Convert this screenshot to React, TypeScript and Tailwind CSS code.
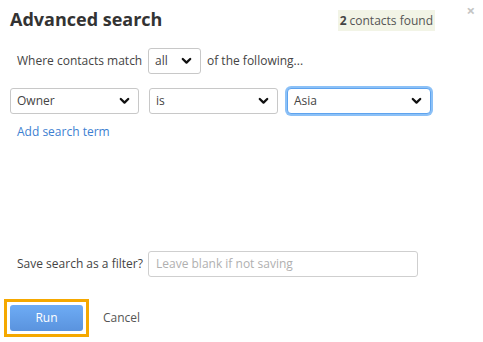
import React from "react";

function Chevron() {
  return (
    <svg width="11" height="8" viewBox="0 0 11 8" className="pointer-events-none shrink-0">
      <path d="M1.8 2 L5.5 5.6 L9.2 2" fill="none" stroke="#111" strokeWidth="2.3" strokeLinecap="round" strokeLinejoin="round" />
    </svg>
  );
}

function FakeSelect({ value, className, focused }: { value: string; className: string; focused?: boolean }) {
  return (
    <div
      className={
        "flex shrink-0 items-center justify-between h-[26px] bg-white pl-[6px] pr-[8px] text-[12px] text-[#444] " +
        (focused
          ? "border border-[#5ea3ee] rounded-[4px] shadow-[0_0_0_2px_#8cc1f7] "
          : "border border-[#c8c8c8] rounded-[3px] ") +
        className
      }
    >
      <span>{value}</span>
      <Chevron />
    </div>
  );
}

export default function App() {
  return (
    <div className="relative w-[483px] h-[342px] overflow-hidden bg-white font-['Open_Sans',sans-serif] text-[#444]">
      <div className="absolute top-[3px] right-[8px] text-[15px] leading-[15px] text-[#c4c4c4] font-bold">×</div>
      <div className="flex items-start justify-between pl-[10px] pt-[6px] pr-[48px]">
        <h1 className="text-[18px] leading-[26px] font-bold text-[#333] whitespace-nowrap">Advanced search</h1>
        <div className="mt-[4px] h-[21px] px-[2px] flex items-center bg-[#f2f4e6] text-[12px] text-[#555] whitespace-nowrap">
          <span className="font-bold text-[#444] mr-[3px]">2</span>contacts found
        </div>
      </div>

      <div className="flex items-center mt-[16px] pl-[17px] text-[12px]">
        <span className="w-[131px] shrink-0 whitespace-nowrap">Where contacts match</span>
        <FakeSelect value="all" className="w-[53px]" />
        <span className="ml-[6px] whitespace-nowrap">of the following...</span>
      </div>

      <div className="flex items-center mt-[14px] pl-[10px]">
        <FakeSelect value="Owner" className="w-[129px]" />
        <FakeSelect value="is" className="w-[129px] ml-[10px]" />
        <FakeSelect value="Asia" className="w-[144px] ml-[9px]" focused />
      </div>

      <div className="mt-[9px] pl-[17px] text-[12px] leading-[18px] text-[#3d7fd1] whitespace-nowrap">Add search term</div>

      <div className="flex items-center mt-[110px] pl-[17px] text-[12px]">
        <span className="w-[131px] shrink-0 whitespace-nowrap">Save search as a filter?</span>
        <div className="w-[270px] shrink-0 h-[26px] border border-[#cfcfcf] rounded-[3px] flex items-center pl-[7px] text-[12px] text-[#b0b0b0] whitespace-nowrap">
          Leave blank if not saving
        </div>
      </div>

      <div className="flex items-center mt-[22px] pl-[4px]">
        <div className="border-[3px] border-[#f5a800] p-[3px]">
          <div className="w-[73px] h-[26px] rounded-[3px] bg-gradient-to-b from-[#6eacf5] to-[#5a93de] flex items-center justify-center text-white text-[12px]">
            Run
          </div>
        </div>
        <span className="ml-[14px] text-[12px] text-[#555]">Cancel</span>
      </div>
    </div>
  );
}
